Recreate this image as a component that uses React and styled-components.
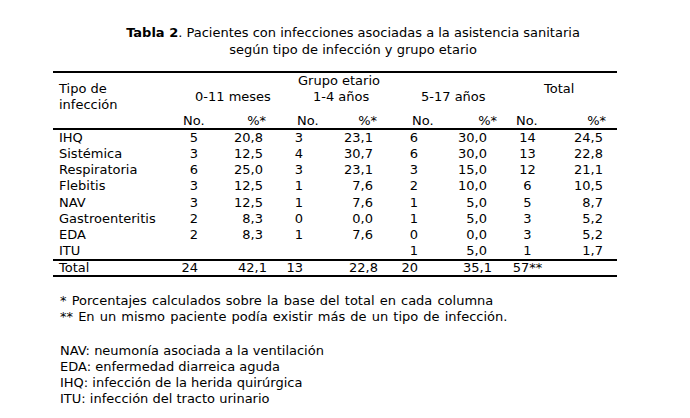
import styled, { createGlobalStyle } from 'styled-components'

const GlobalStyle = createGlobalStyle`
  body {
    margin: 0;
    background: #fff;
    color: #000;
    font-family: "DejaVu Sans", Verdana, sans-serif;
    font-size: 13px;
  }
`

const COLS = '127px 30px 60px 60px 55px 55px 65px 45px 67px'

// right paddings of the number cells, per column (1..8)
const PAD = [12, 7, 27, 12, 22, 18, null, 14]
const TOTAL_PAD = [12, 3, 27, 7, 22, 13, null, 14]

const rows = [
  ['IHQ', '5', '20,8', '3', '23,1', '6', '30,0', '14', '24,5'],
  ['Sistémica', '3', '12,5', '4', '30,7', '6', '30,0', '13', '22,8'],
  ['Respiratoria', '6', '25,0', '3', '23,1', '3', '15,0', '12', '21,1'],
  ['Flebitis', '3', '12,5', '1', '7,6', '2', '10,0', '6', '10,5'],
  ['NAV', '3', '12,5', '1', '7,6', '1', '5,0', '5', '8,7'],
  ['Gastroenteritis', '2', '8,3', '0', '0,0', '1', '5,0', '3', '5,2'],
  ['EDA', '2', '8,3', '1', '7,6', '0', '0,0', '3', '5,2'],
  ['ITU', '', '', '', '', '1', '5,0', '1', '1,7'],
]

const total = ['Total', '24', '42,1', '13', '22,8', '20', '35,1', '57**', '']

function App() {
  return (
    <Page>
      <GlobalStyle />
      <Caption>
        <b>Tabla 2</b>. Pacientes con infecciones asociadas a la asistencia sanitaria
        <br />
        según tipo de infección y grupo etario
      </Caption>

      <Table>
        <Head>
          <HeadCell $col="1" $row="2 / 6" $pl={6}>
            Tipo de
            <br />
            infección
          </HeadCell>
          <HeadCell $col="4 / 6" $row="1 / 3" $pl={28}>Grupo etario</HeadCell>
          <HeadCell $col="2 / 4" $row="3 / 5" $pl={15}>0-11 meses</HeadCell>
          <HeadCell $col="4 / 6" $row="3 / 5" $pl={43}>1-4 años</HeadCell>
          <HeadCell $col="6 / 8" $row="3 / 5" $pl={36}>5-17 años</HeadCell>
          <HeadCell $col="8 / 10" $row="2 / 4" $pl={39}>Total</HeadCell>

          <HeadCell $col="2" $row="6" $pl={3}>No.</HeadCell>
          <HeadCell $col="3" $row="6" $pr={4} $right>%*</HeadCell>
          <HeadCell $col="4" $row="6" $pl={27}>No.</HeadCell>
          <HeadCell $col="5" $row="6" $pr={8} $right>%*</HeadCell>
          <HeadCell $col="6" $row="6" $pl={27}>No.</HeadCell>
          <HeadCell $col="7" $row="6" $pr={8} $right>%*</HeadCell>
          <HeadCell $col="8" $row="6" $pl={11}>No.</HeadCell>
          <HeadCell $col="9" $row="6" $pr={11} $right>%*</HeadCell>
        </Head>

        <Body>
          {rows.map((r) => (
            <Row key={r[0]}>
              <Label>{r[0]}</Label>
              {r.slice(1).map((v, i) => (
                <Num key={i} $pr={PAD[i]}>{v}</Num>
              ))}
            </Row>
          ))}
        </Body>

        <TotalRow>
          <Label>{total[0]}</Label>
          {total.slice(1).map((v, i) => (
            <Num key={i} $pr={TOTAL_PAD[i]}>{v}</Num>
          ))}
        </TotalRow>
      </Table>

      <Notes $spread>
        <p>* Porcentajes calculados sobre la base del total en cada columna</p>
        <p>** En un mismo paciente podía existir más de un tipo de infección.</p>
      </Notes>
      <Notes $gap>
        <p>NAV: neumonía asociada a la ventilación</p>
        <p>EDA: enfermedad diarreica aguda</p>
        <p>IHQ: infección de la herida quirúrgica</p>
        <p>ITU: infección del tracto urinario</p>
      </Notes>
    </Page>
  )
}

export default App

const Page = styled.div`
  width: 690px;
  height: 418px;
  overflow: hidden;
`

const Caption = styled.div`
  box-sizing: border-box;
  width: 690px;
  padding: 24px 0 0 16px;
  text-align: center;
  line-height: 17px;
  margin-bottom: 13px;
  b {
    font-weight: bold;
  }
`

const Table = styled.div`
  margin-left: 53px;
  width: 564px;
  border-top: 2px solid #000;
  border-bottom: 2px solid #000;
`

const Head = styled.div`
  display: grid;
  grid-template-columns: ${COLS};
  grid-template-rows: repeat(5, 8px) 15px;
  border-bottom: 2px solid #000;
`

const HeadCell = styled.div`
  grid-column: ${(p) => p.$col};
  grid-row: ${(p) => p.$row};
  align-self: center;
  line-height: 16px;
  white-space: nowrap;
  padding-left: ${(p) => p.$pl || 0}px;
  padding-right: ${(p) => p.$pr || 0}px;
  text-align: ${(p) => (p.$right ? 'right' : 'left')};
`

const Body = styled.div`
  border-bottom: 2px solid #000;
`

const Row = styled.div`
  display: grid;
  grid-template-columns: ${COLS};
  height: 16.125px;
  line-height: 16.125px;
`

const TotalRow = styled(Row)`
  height: 14px;
  line-height: 14px;
`

const Label = styled.div`
  padding-left: 6px;
  white-space: nowrap;
`

const Num = styled.div`
  white-space: nowrap;
  text-align: ${(p) => (p.$pr == null ? 'center' : 'right')};
  padding-right: ${(p) => p.$pr || 0}px;
`

const Notes = styled.div`
  margin: ${(p) => (p.$gap ? '17px' : '16px')} 0 0 60px;
  line-height: 16.3px;
  word-spacing: ${(p) => (p.$spread ? '1px' : '0')};
  p {
    margin: 0;
  }
`
